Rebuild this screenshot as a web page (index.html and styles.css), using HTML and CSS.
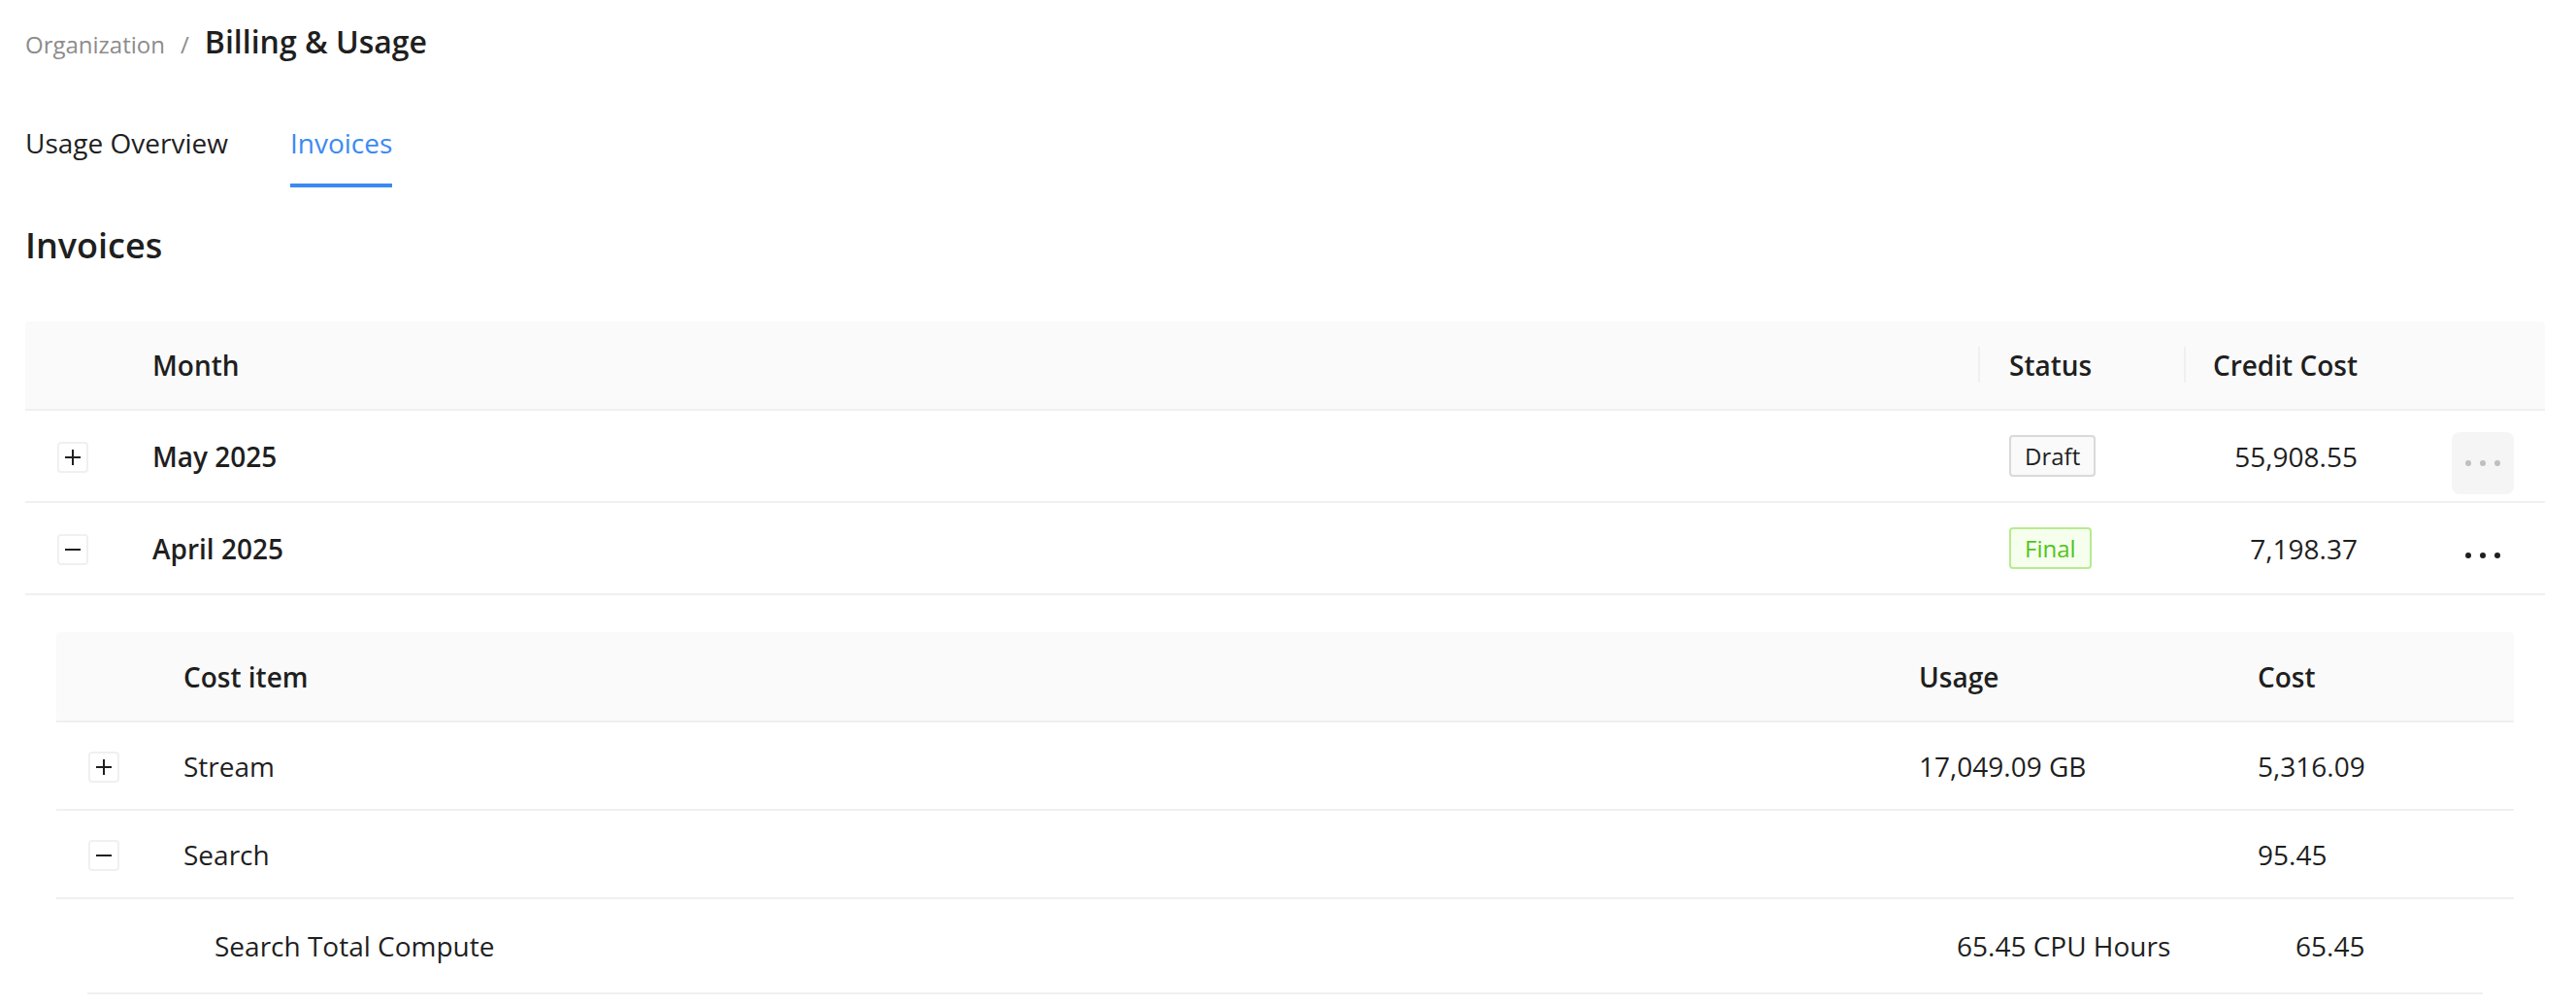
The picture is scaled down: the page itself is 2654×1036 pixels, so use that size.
FILE: index.html
```html
<!DOCTYPE html>
<html lang="en">
<head>
    <meta charset="UTF-8">
    <meta name="viewport" content="width=device-width, initial-scale=1.0">
    <title>Billing &amp; Usage</title>
    <link rel="stylesheet" href="styles.css">
</head>
<body>
    <div class="page">
        <!-- Breadcrumb -->
        <nav class="breadcrumb">
            <span class="crumb">Organization</span>
            <span class="crumb-sep">/</span>
            <span class="crumb-current">Billing &amp; Usage</span>
        </nav>

        <!-- Tabs -->
        <div class="tabs">
            <a class="tab" href="#">Usage Overview</a>
            <a class="tab tab-active" href="#">Invoices</a>
        </div>

        <h2 class="section-title">Invoices</h2>

        <!-- Invoices table -->
        <div class="invoice-table">
            <div class="inv-row inv-head">
                <div class="cell"></div>
                <div class="cell">Month</div>
                <div class="cell cell-sep">Status</div>
                <div class="cell cell-sep cell-num">Credit Cost</div>
                <div class="cell"></div>
            </div>

            <div class="inv-row">
                <div class="cell cell-expand">
                    <span class="expander">
                        <svg width="18" height="18" viewBox="0 0 18 18"><path d="M1 9h16M9 1v16" stroke="currentColor" stroke-width="2"/></svg>
                    </span>
                </div>
                <div class="cell cell-strong">May 2025</div>
                <div class="cell"><span class="tag tag-draft">Draft</span></div>
                <div class="cell cell-num">55,908.55</div>
                <div class="cell cell-action">
                    <button class="more more-muted">
                        <svg width="36" height="8" viewBox="0 0 36 8"><circle cx="3" cy="4" r="3"/><circle cx="18" cy="4" r="3"/><circle cx="33" cy="4" r="3"/></svg>
                    </button>
                </div>
            </div>

            <div class="inv-row">
                <div class="cell cell-expand">
                    <span class="expander">
                        <svg width="18" height="18" viewBox="0 0 18 18"><path d="M1 9h16" stroke="currentColor" stroke-width="2"/></svg>
                    </span>
                </div>
                <div class="cell cell-strong">April 2025</div>
                <div class="cell"><span class="tag tag-final">Final</span></div>
                <div class="cell cell-num">7,198.37</div>
                <div class="cell cell-action">
                    <button class="more">
                        <svg width="36" height="8" viewBox="0 0 36 8"><circle cx="3" cy="4" r="3"/><circle cx="18" cy="4" r="3"/><circle cx="33" cy="4" r="3"/></svg>
                    </button>
                </div>
            </div>

            <!-- Expanded April 2025 -->
            <div class="inv-expanded">
                <div class="cost-table">
                    <div class="cost-row cost-head">
                        <div class="cell"></div>
                        <div class="cell">Cost item</div>
                        <div class="cell">Usage</div>
                        <div class="cell">Cost</div>
                    </div>

                    <div class="cost-row">
                        <div class="cell cell-expand">
                            <span class="expander">
                                <svg width="18" height="18" viewBox="0 0 18 18"><path d="M1 9h16M9 1v16" stroke="currentColor" stroke-width="2"/></svg>
                            </span>
                        </div>
                        <div class="cell">Stream</div>
                        <div class="cell">17,049.09 GB</div>
                        <div class="cell">5,316.09</div>
                    </div>

                    <div class="cost-row">
                        <div class="cell cell-expand">
                            <span class="expander">
                                <svg width="18" height="18" viewBox="0 0 18 18"><path d="M1 9h16" stroke="currentColor" stroke-width="2"/></svg>
                            </span>
                        </div>
                        <div class="cell">Search</div>
                        <div class="cell"></div>
                        <div class="cell">95.45</div>
                    </div>

                    <div class="cost-sub">
                        <div class="cost-row">
                            <div class="cell"></div>
                            <div class="cell">Search Total Compute</div>
                            <div class="cell">65.45 CPU Hours</div>
                            <div class="cell">65.45</div>
                        </div>
                    </div>
                </div>
            </div>
        </div>
    </div>
</body>
</html>
```

FILE: styles.css
```css
* {
    box-sizing: border-box;
}

body {
    margin: 0;
    background: #ffffff;
    color: #1f1f1f;
    font-family: "Open Sans", "Noto Sans", sans-serif;
}

.page {
    padding: 21px 32px 0 26px;
}

/* Breadcrumb */
.breadcrumb {
    display: flex;
    align-items: baseline;
    line-height: 44px;
}

.crumb,
.crumb-sep {
    font-size: 24px;
    color: #8c8c8c;
}

.crumb-sep {
    margin: 0 16px;
}

.crumb-current {
    font-size: 32px;
    font-weight: 600;
    color: #1f1f1f;
}

/* Tabs */
.tabs {
    display: flex;
    gap: 64px;
    margin-top: 33px;
}

.tab {
    padding: 24px 0 20px;
    font-size: 28px;
    line-height: 44px;
    color: #1f1f1f;
    text-decoration: none;
    border-bottom: 4px solid transparent;
}

.tab-active {
    color: #3c89f4;
    border-bottom-color: #3c89f4;
}

.section-title {
    margin: 34px 0 52px;
    font-size: 36px;
    line-height: 52px;
    font-weight: 600;
}

/* Tables */
.inv-row {
    display: grid;
    grid-template-columns: 99px 1fr 212px 211px 161px;
    align-items: center;
    height: 95px;
    border-bottom: 2px solid #f0f0f0;
}

.inv-head,
.cost-head {
    background: #fafafa;
    font-weight: 600;
    border-radius: 4px 4px 0 0;
}

.inv-head {
    height: 92px;
}

.cell {
    position: relative;
    display: flex;
    align-items: center;
    padding: 0 32px;
    font-size: 28px;
    line-height: 44px;
    white-space: nowrap;
}

.cell-num {
    justify-content: flex-end;
}

.cell-strong {
    font-weight: 600;
}

/* little column dividers in the header */
.cell-sep::before {
    content: "";
    position: absolute;
    left: 0;
    top: 50%;
    width: 2px;
    height: 37px;
    margin-top: -19px;
    background: #f0f0f0;
}

.cell-expand {
    padding: 0 0 0 33px;
}

.expander {
    display: inline-flex;
    align-items: center;
    justify-content: center;
    width: 32px;
    height: 32px;
    margin-top: 2px;
    border: 2px solid #f0f0f0;
    border-radius: 4px;
    background: #ffffff;
    color: #1f1f1f;
}

.cell-action {
    justify-content: flex-end;
}

.more {
    display: flex;
    align-items: center;
    justify-content: center;
    width: 64px;
    height: 64px;
    margin-top: 14px;
    padding: 0;
    border: 0;
    border-radius: 8px;
    background: transparent;
    fill: #1f1f1f;
}

.more-muted {
    background: #f5f5f5;
    fill: #bfbfbf;
}

/* Status tags */
.tag {
    display: inline-block;
    padding: 0 14px;
    font-size: 24px;
    line-height: 39px;
    border: 2px solid #d9d9d9;
    border-radius: 4px;
    background: #fafafa;
    color: #1f1f1f;
}

.tag-final {
    border-color: #b7eb8f;
    background: #f6ffed;
    color: #52c41a;
}

/* Expanded invoice: cost items */
.inv-expanded {
    padding: 38px 32px 0;
}

.cost-row {
    display: grid;
    grid-template-columns: 99px 1fr 349px 296px;
    align-items: center;
    height: 91px;
    border-bottom: 2px solid #f0f0f0;
}

.cost-head {
    height: 93px;
}

.cost-sub {
    padding: 0 32px;
}

.cost-sub .cost-row {
    grid-template-columns: 99px 1fr 349px 225px;
    height: 98px;
}
```
